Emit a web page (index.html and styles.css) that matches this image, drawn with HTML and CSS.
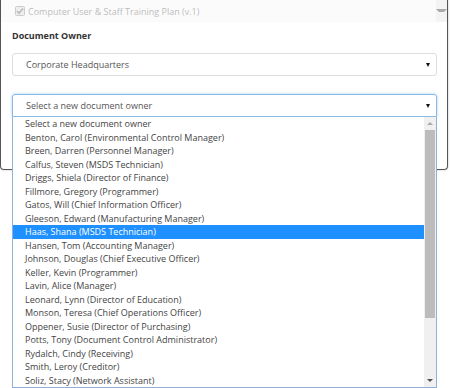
FILE: index.html
```html
<!DOCTYPE html>
<html lang="en">
<head>
  <meta charset="UTF-8" />
  <title>Document Owner</title>
  <link rel="stylesheet" href="styles.css">
</head>
<body>

  <!-- Modal -->
  <div class="modal">
    <div class="plan-row">
      <svg class="check" width="10" height="10" viewBox="0 0 10 10">
        <rect x="0.5" y="0.5" width="9" height="9" rx="1" fill="#eee" stroke="#ccc"/>
        <path d="M2 5 L4 7.2 L8 2.5" fill="none" stroke="#bbb" stroke-width="1.6"/>
      </svg>
      <span>Computer User &amp; Staff Training Plan (v.1)</span>
      <div class="plan-scroll"><span class="tri tri-small"></span></div>
    </div>

    <div class="modal-body">
      <div class="field-label">Document Owner</div>

      <div class="select">
        <span>Corporate Headquarters</span>
        <span class="tri"></span>
      </div>

      <div class="select-wrap">
        <div class="select focused">
          <span>Select a new document owner</span>
          <span class="tri"></span>
        </div>

        <!-- Dropdown -->
        <div class="dropdown">
          <ul class="options">
            <li>Select a new document owner</li>
            <li>Benton, Carol (Environmental Control Manager)</li>
            <li>Breen, Darren (Personnel Manager)</li>
            <li>Calfus, Steven (MSDS Technician)</li>
            <li>Driggs, Shiela (Director of Finance)</li>
            <li>Fillmore, Gregory (Programmer)</li>
            <li>Gatos, Will (Chief Information Officer)</li>
            <li>Gleeson, Edward (Manufacturing Manager)</li>
            <li class="active">Haas, Shana (MSDS Technician)</li>
            <li>Hansen, Tom (Accounting Manager)</li>
            <li>Johnson, Douglas (Chief Executive Officer)</li>
            <li>Keller, Kevin (Programmer)</li>
            <li>Lavin, Alice (Manager)</li>
            <li>Leonard, Lynn (Director of Education)</li>
            <li>Monson, Teresa (Chief Operations Officer)</li>
            <li>Oppener, Susie (Director of Purchasing)</li>
            <li>Potts, Tony (Document Control Administrator)</li>
            <li>Rydalch, Cindy (Receiving)</li>
            <li>Smith, Leroy (Creditor)</li>
            <li>Soliz, Stacy (Network Assistant)</li>
          </ul>
          <div class="scrollbar">
            <span class="arrow up"></span>
            <div class="thumb"></div>
            <span class="arrow down"></span>
          </div>
        </div>
      </div>
    </div>
  </div>

</body>
</html>
```

FILE: styles.css
```css
html, body {
  height: 100%;
}
body {
  margin: 0;
  min-height: 388px;
  font-family: "Open Sans", Arial, sans-serif;
  font-size: 9px;
  color: #444;
  background: #fff;
}
.modal {
  width: 446px;
  height: 169px;
  border: 1px solid #555;
  border-top: none;
  border-radius: 0 0 4px 4px;
  box-shadow: 0 0 2px rgba(0,0,0,0.3);
}
.plan-row {
  height: 22px;
  display: flex;
  align-items: center;
  background: #fbfbfb;
  color: #bdbdbd;
  font-size: 9px;
  padding-left: 14px;
}
.check {
  margin-right: 3px;
}
.plan-row span {
  flex: 1;
}
.plan-scroll {
  width: 11px;
  height: 22px;
  background: #f3f3f3;
  display: flex;
  justify-content: center;
  padding-top: 9px;
  box-sizing: border-box;
}
.modal-body {
  padding: 0 10px 0 11px;
}
.field-label {
  font-weight: bold;
  color: #333;
  line-height: 14px;
  margin-top: 7px;
  margin-bottom: 10px;
}
.select {
  height: 23px;
  box-sizing: border-box;
  border: 1px solid #ddd;
  border-radius: 3px;
  display: flex;
  align-items: center;
  justify-content: space-between;
  padding: 0 6px 0 13px;
  color: #555;
}
.select-wrap {
  position: relative;
  margin-top: 18px;
}
.select.focused {
  border-color: #8ab8e6;
  box-shadow: 0 0 3px rgba(102,175,233,0.6);
  border-radius: 3px 3px 0 0;
}
.tri {
  width: 0;
  height: 0;
  border-left: 2.5px solid transparent;
  border-right: 2.5px solid transparent;
  border-top: 4px solid #111;
}
.tri-small {
  border-top: 3px solid #aaa;
  border-left-width: 3px;
  border-right-width: 3px;
}
.dropdown {
  position: absolute;
  top: 23px;
  left: 0;
  right: 0;
  height: 270px;
  background: #fff;
  border: 1px solid #8fb0dc;
  border-top: none;
  display: flex;
  z-index: 10;
}
.options {
  list-style: none;
  margin: 0;
  padding: 0;
  flex: 1;
}
.options li {
  height: 13.5px;
  line-height: 13.5px;
  padding-left: 12px;
  color: #444;
  white-space: nowrap;
}
.options li.active {
  background: #1e90ff;
  color: #fff;
}
.scrollbar {
  width: 12px;
  background: #f0f0f0;
  display: flex;
  flex-direction: column;
  align-items: center;
}
.thumb {
  width: 10px;
  height: 188px;
  background: #bcbcbc;
  margin-top: 5px;
}
.arrow {
  width: 0;
  height: 0;
  border-left: 3px solid transparent;
  border-right: 3px solid transparent;
}
.arrow.up {
  border-bottom: 3px solid #aaa;
  margin-top: 5px;
}
.arrow.down {
  border-top: 3px solid #505050;
  margin-top: auto;
  margin-bottom: 5px;
}
```
